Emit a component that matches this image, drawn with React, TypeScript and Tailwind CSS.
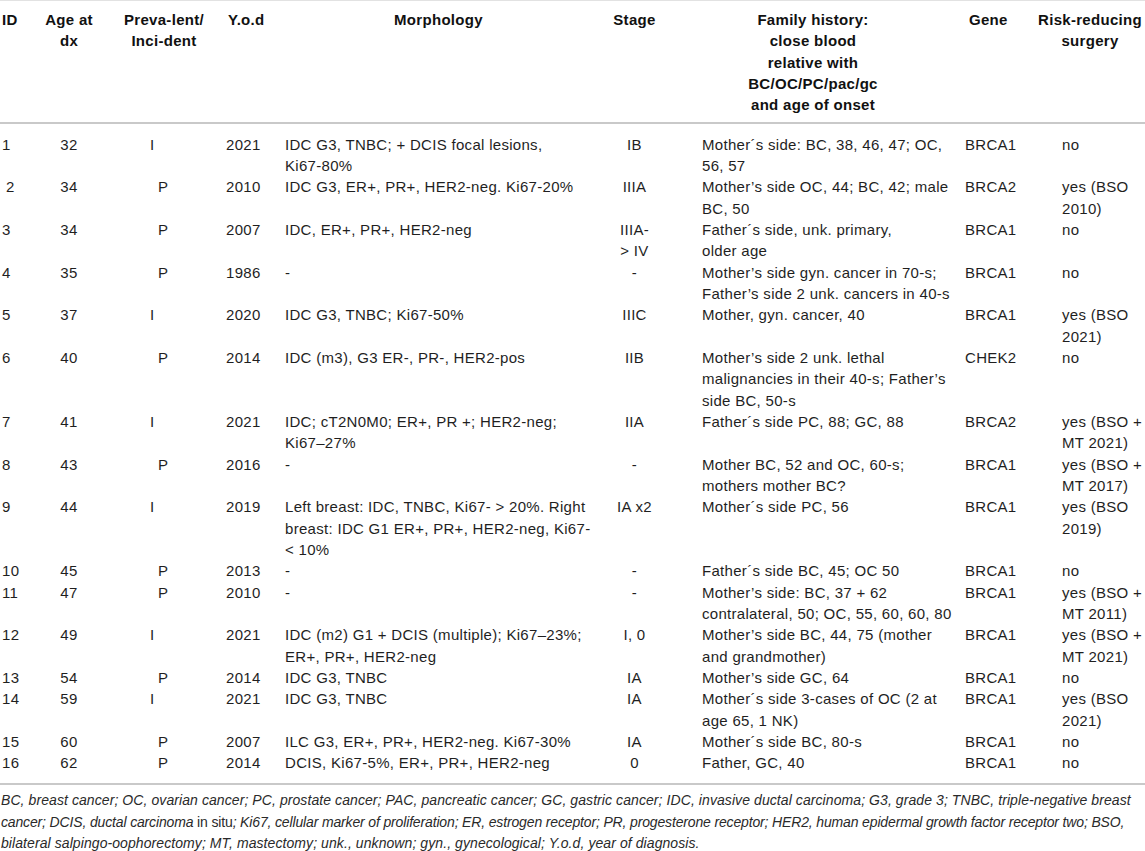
import React from "react";

type Row = [string, string, string, string, string, string, string, string, string];

const rows: Row[] = [
  ["1", "32", "I", "2021", "IDC G3, TNBC; + DCIS focal lesions,\nKi67-80%", "IB", "Mother´s side: BC, 38, 46, 47; OC,\n56, 57", "BRCA1", "no"],
  ["2", "34", "P", "2010", "IDC G3, ER+, PR+, HER2-neg. Ki67-20%", "IIIA", "Mother’s side OC, 44; BC, 42; male\nBC, 50", "BRCA2", "yes (BSO\n2010)"],
  ["3", "34", "P", "2007", "IDC, ER+, PR+, HER2-neg", "IIIA-\n> IV", "Father´s side, unk. primary,\nolder age", "BRCA1", "no"],
  ["4", "35", "P", "1986", "-", "-", "Mother’s side gyn. cancer in 70-s;\nFather’s side 2 unk. cancers in 40-s", "BRCA1", "no"],
  ["5", "37", "I", "2020", "IDC G3, TNBC; Ki67-50%", "IIIC", "Mother, gyn. cancer, 40", "BRCA1", "yes (BSO\n2021)"],
  ["6", "40", "P", "2014", "IDC (m3), G3 ER-, PR-, HER2-pos", "IIB", "Mother’s side 2 unk. lethal\nmalignancies in their 40-s; Father’s\nside BC, 50-s", "CHEK2", "no"],
  ["7", "41", "I", "2021", "IDC; cT2N0M0; ER+, PR +; HER2-neg;\nKi67–27%", "IIA", "Father´s side PC, 88; GC, 88", "BRCA2", "yes (BSO +\nMT 2021)"],
  ["8", "43", "P", "2016", "-", "-", "Mother BC, 52 and OC, 60-s;\nmothers mother BC?", "BRCA1", "yes (BSO +\nMT 2017)"],
  ["9", "44", "I", "2019", "Left breast: IDC, TNBC, Ki67- > 20%. Right\nbreast: IDC G1 ER+, PR+, HER2-neg, Ki67-\n< 10%", "IA x2", "Mother´s side PC, 56", "BRCA1", "yes (BSO\n2019)"],
  ["10", "45", "P", "2013", "-", "-", "Father´s side BC, 45; OC 50", "BRCA1", "no"],
  ["11", "47", "P", "2010", "-", "-", "Mother’s side: BC, 37 + 62\ncontralateral, 50; OC, 55, 60, 60, 80", "BRCA1", "yes (BSO +\nMT 2011)"],
  ["12", "49", "I", "2021", "IDC (m2) G1 + DCIS (multiple); Ki67–23%;\nER+, PR+, HER2-neg", "I, 0", "Mother’s side BC, 44, 75 (mother\nand grandmother)", "BRCA1", "yes (BSO +\nMT 2021)"],
  ["13", "54", "P", "2014", "IDC G3, TNBC", "IA", "Mother’s side GC, 64", "BRCA1", "no"],
  ["14", "59", "I", "2021", "IDC G3, TNBC", "IA", "Mother´s side 3-cases of OC (2 at\nage 65, 1 NK)", "BRCA1", "yes (BSO\n2021)"],
  ["15", "60", "P", "2007", "ILC G3, ER+, PR+, HER2-neg. Ki67-30%", "IA", "Mother´s side BC, 80-s", "BRCA1", "no"],
  ["16", "62", "P", "2014", "DCIS, Ki67-5%, ER+, PR+, HER2-neg", "0", "Father, GC, 40", "BRCA1", "no"],
];

// per column cell classes for body
const cellCls = [
  "pl-[2px]",
  "text-center",
  "pl-[62px]",
  "pl-[4px]",
  "pl-[5px]",
  "text-center",
  "pl-[30px]",
  "pl-[7px]",
  "pl-[27px]",
];

const cols = "grid grid-cols-[42px_54px_126px_58px_317px_75px_286px_77px_110px]";

const cellClass = (row: Row, i: number) => {
  let c = "whitespace-pre " + cellCls[i];
  if (i === 0 && row[0] === "2") c = "whitespace-pre pl-[6px]";
  if (i === 2 && row[2] === "I") c = "whitespace-pre pl-[54px]";
  return c;
};

const App = () => {
  return (
    <div className="w-[1145px] overflow-hidden bg-white font-['Liberation_Sans',Arial,sans-serif] text-[15px] leading-[21.33px] tracking-[0.3px] text-[#1f1f1f]">
      <div className="border-t border-[#e2e2e2]" />

      {/* header */}
      <div className={cols + " border-b-2 border-[#c9c9c9] pt-[8px] pb-[6px] font-bold text-[#111]"}>
        <div className="pl-[2px]">ID</div>
        <div className="text-center">
          Age at
          <br />
          dx
        </div>
        <div className="pl-[10px] text-center">
          Preva-lent/
          <br />
          Inci-dent
        </div>
        <div className="pl-[6px]">Y.o.d</div>
        <div className="text-center">Morphology</div>
        <div className="text-center">Stage</div>
        <div className="pr-[4px] text-center">
          Family history:
          <br />
          close blood
          <br />
          relative with
          <br />
          BC/OC/PC/pac/gc
          <br />
          and age of onset
        </div>
        <div className="pl-[11px]">Gene</div>
        <div className="whitespace-nowrap text-center">
          Risk-reducing
          <br />
          surgery
        </div>
      </div>

      {/* body */}
      <div className={cols + " border-b-2 border-[#c9c9c9] pt-[10px] pb-[10px]"}>
        {rows.map((row) =>
          row.map((cell, i) => (
            <div key={row[0] + "-" + i} className={cellClass(row, i)}>
              {cell}
            </div>
          ))
        )}
      </div>

      {/* footnote */}
      <div className="pt-[5px] pl-[1px] text-[14px] italic text-[#2a2a2a]">
        <div className="whitespace-nowrap tracking-[0.08px]">
          BC, breast cancer; OC, ovarian cancer; PC, prostate cancer; PAC, pancreatic cancer; GC, gastric cancer; IDC, invasive ductal carcinoma; G3, grade 3; TNBC, triple-negative breast
        </div>
        <div className="whitespace-nowrap tracking-[-0.15px]">
          cancer; DCIS, ductal carcinoma <span className="not-italic">in situ</span>; Ki67, cellular marker of proliferation; ER, estrogen receptor; PR, progesterone receptor; HER2, human epidermal growth factor receptor two; BSO,
        </div>
        <div className="whitespace-nowrap tracking-[0.08px]">
          bilateral salpingo-oophorectomy; MT, mastectomy; unk., unknown; gyn., gynecological; Y.o.d, year of diagnosis.
        </div>
      </div>
    </div>
  );
};

export default App;
